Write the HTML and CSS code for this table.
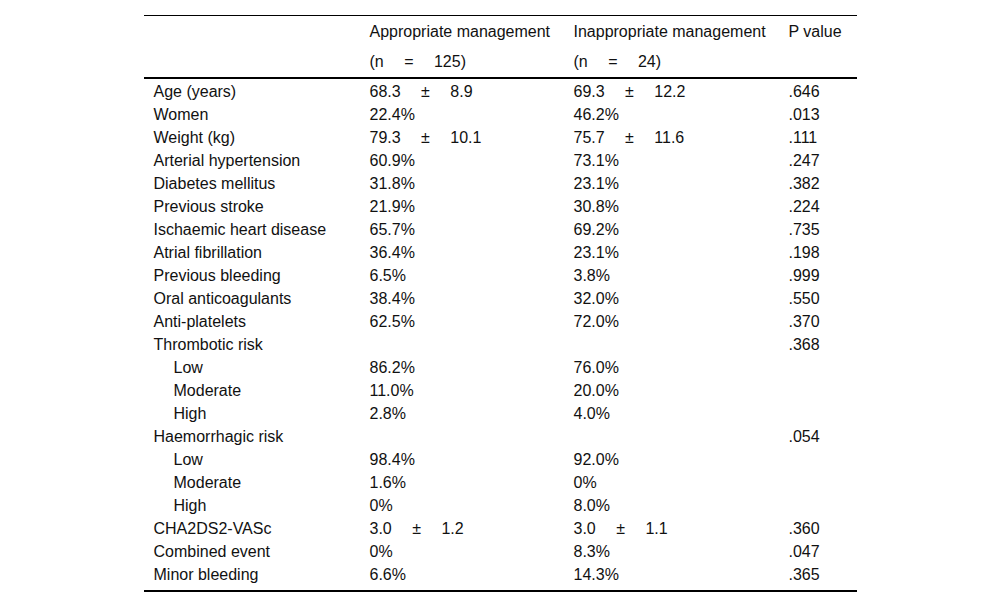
FILE: index.html
```html
<!DOCTYPE html>
<html lang="en">
<head>
<meta charset="utf-8">
<title>Table</title>
<link rel="stylesheet" href="styles.css">
</head>
<body>
<table class="data">
  <colgroup>
    <col class="c1"><col class="c2"><col class="c3"><col class="c4">
  </colgroup>
  <thead>
    <tr class="h1">
      <th></th>
      <th>Appropriate management</th>
      <th>Inappropriate management</th>
      <th>P value</th>
    </tr>
    <tr class="h2">
      <th></th>
      <th>(n &#8195;= &#8195;125)</th>
      <th>(n &#8195;= &#8195;24)</th>
      <th></th>
    </tr>
  </thead>
  <tbody>
    <tr><td>Age (years)</td><td>68.3 &#8195;± &#8195;8.9</td><td>69.3 &#8195;± &#8195;12.2</td><td>.646</td></tr>
    <tr><td>Women</td><td>22.4%</td><td>46.2%</td><td>.013</td></tr>
    <tr><td>Weight (kg)</td><td>79.3 &#8195;± &#8195;10.1</td><td>75.7 &#8195;± &#8195;11.6</td><td>.111</td></tr>
    <tr><td>Arterial hypertension</td><td>60.9%</td><td>73.1%</td><td>.247</td></tr>
    <tr><td>Diabetes mellitus</td><td>31.8%</td><td>23.1%</td><td>.382</td></tr>
    <tr><td>Previous stroke</td><td>21.9%</td><td>30.8%</td><td>.224</td></tr>
    <tr><td>Ischaemic heart disease</td><td>65.7%</td><td>69.2%</td><td>.735</td></tr>
    <tr><td>Atrial fibrillation</td><td>36.4%</td><td>23.1%</td><td>.198</td></tr>
    <tr><td>Previous bleeding</td><td>6.5%</td><td>3.8%</td><td>.999</td></tr>
    <tr><td>Oral anticoagulants</td><td>38.4%</td><td>32.0%</td><td>.550</td></tr>
    <tr><td>Anti-platelets</td><td>62.5%</td><td>72.0%</td><td>.370</td></tr>
    <tr><td>Thrombotic risk</td><td></td><td></td><td>.368</td></tr>
    <tr><td class="sub">Low</td><td>86.2%</td><td>76.0%</td><td></td></tr>
    <tr><td class="sub">Moderate</td><td>11.0%</td><td>20.0%</td><td></td></tr>
    <tr><td class="sub">High</td><td>2.8%</td><td>4.0%</td><td></td></tr>
    <tr><td>Haemorrhagic risk</td><td></td><td></td><td>.054</td></tr>
    <tr><td class="sub">Low</td><td>98.4%</td><td>92.0%</td><td></td></tr>
    <tr><td class="sub">Moderate</td><td>1.6%</td><td>0%</td><td></td></tr>
    <tr><td class="sub">High</td><td>0%</td><td>8.0%</td><td></td></tr>
    <tr><td>CHA2DS2-VASc</td><td>3.0 &#8195;± &#8195;1.2</td><td>3.0 &#8195;± &#8195;1.1</td><td>.360</td></tr>
    <tr><td>Combined event</td><td>0%</td><td>8.3%</td><td>.047</td></tr>
    <tr class="last"><td>Minor bleeding</td><td>6.6%</td><td>14.3%</td><td>.365</td></tr>
  </tbody>
</table>
</body>
</html>
```
FILE: styles.css
```css
html, body {
  margin: 0;
  padding: 0;
  background: #fff;
}

.data {
  width: 713px;
  margin: 15px auto 0;
  border-collapse: separate;
  border-spacing: 0;
  table-layout: fixed;
  font-family: "Liberation Sans", Arial, sans-serif;
  font-size: 16px;
  color: #111;
}

.c1 { width: 216px; }
.c2 { width: 204px; }
.c3 { width: 215px; }
.c4 { width: 78px; }

.data th,
.data td {
  padding: 0 0 0 10px;
  text-align: left;
  font-weight: normal;
  white-space: nowrap;
  vertical-align: top;
}

.h1 th {
  border-top: 1px solid #000;
  padding-top: 1px;
  height: 29px;
  line-height: 29px;
}

.h2 th {
  padding-top: 1px;
  height: 30px;
  line-height: 30px;
  border-bottom: 2px solid #000;
}

.data td {
  padding-top: 2px;
  height: 21px;
  line-height: 21px;
}

.data td.sub {
  padding-left: 30px;
}

.last td {
  padding-bottom: 5px;
  border-bottom: 2px solid #000;
}
```
